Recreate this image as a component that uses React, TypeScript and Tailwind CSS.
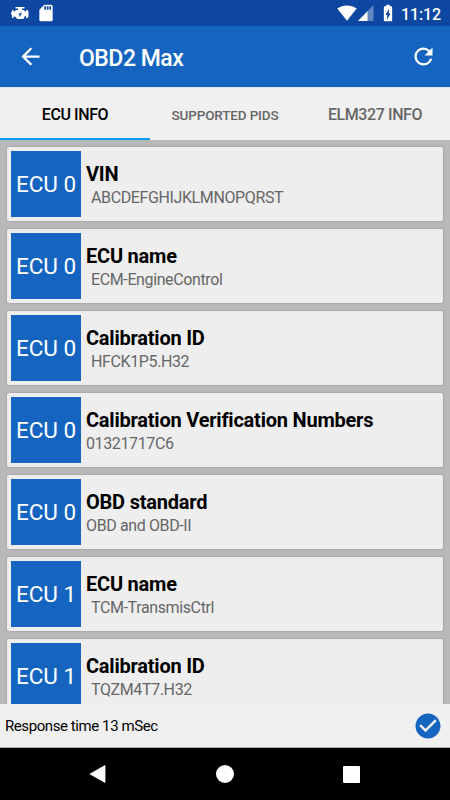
import { MdArrowBack, MdBatteryChargingFull, MdCheckCircle, MdRefresh, MdSdCard } from 'react-icons/md';

type EcuItem = {
  ecu: string;
  title: string;
  value: string;
  padded?: boolean;
};

const items: EcuItem[] = [
  { ecu: 'ECU 0', title: 'VIN', value: 'ABCDEFGHIJKLMNOPQRST', padded: true },
  { ecu: 'ECU 0', title: 'ECU name', value: 'ECM-EngineControl', padded: true },
  { ecu: 'ECU 0', title: 'Calibration ID', value: 'HFCK1P5.H32', padded: true },
  { ecu: 'ECU 0', title: 'Calibration Verification Numbers', value: '01321717C6' },
  { ecu: 'ECU 0', title: 'OBD standard', value: 'OBD and OBD-II' },
  { ecu: 'ECU 1', title: 'ECU name', value: 'TCM-TransmisCtrl', padded: true },
  { ecu: 'ECU 1', title: 'Calibration ID', value: 'TQZM4T7.H32', padded: true },
];

function StatusBar() {
  return (
    <div className="flex h-[26px] shrink-0 items-center bg-[#0d47a1] pl-[11px] pr-[9px] text-white">
      <svg width="18" height="14" viewBox="0 0 18 14" fill="currentColor">
        <path d="M4.500 1h9v1.600H11V4h2l1 1.500h1V4h1.500l1 1.500v5l-1 1.500H15v-2h-1l-1.500 3H6.500L4 10.500H2.500V12H1V9H.2V6H1V4h1.500v1.500h1L5 4h2V2.600H4.500z" />
        <path d="M11.200 5.500 7 8.300l1.800.3-1.300 2.600 3.600-3.200-1.600-.4z" fill="#0d47a1" />
      </svg>
      <MdSdCard size={20} className="ml-[7px]" />
      <div className="ml-auto flex items-center">
        <svg width="20" height="16" viewBox="0 0 20 16" fill="currentColor">
          <path d="M.3 3.500C6-.6 14-.6 19.700 3.500L10 15.700z" />
        </svg>
        <svg width="16" height="16" viewBox="0 0 16 16" fill="currentColor" className="ml-px">
          <path d="M15.500 0v16H0z" opacity=".35" />
          <path d="M9.500 6.200V16H0z" />
        </svg>
        <MdBatteryChargingFull size={20} className="ml-1" />
        <span className="ml-[3px] mt-[3px] text-base font-medium leading-none tracking-[-0.1px]">11:12</span>
      </div>
    </div>
  );
}

function AppBar() {
  return (
    <header className="flex h-[61px] shrink-0 items-center bg-[#1565c0] pl-[17px] pr-[13px] text-white">
      <MdArrowBack size={27} />
      <h1 className="ml-[35px] mt-[3px] text-[23px] font-medium leading-none tracking-[-0.5px]">OBD2 Max</h1>
      <MdRefresh size={27} className="ml-auto" />
    </header>
  );
}

function Tabs() {
  return (
    <nav className="grid h-[53px] shrink-0 grid-cols-3 border-t border-[#dfe5ee] bg-[#f0f0f0] text-center font-medium text-[#666]">
      <div className="flex items-center justify-center border-b-2 border-[#03a0f0] pt-1 text-base tracking-[-0.4px] text-black">ECU INFO</div>
      <div className="flex items-center justify-center pt-0.5 text-[13.500px] tracking-[-0.15px]">SUPPORTED PIDS</div>
      <div className="flex items-center justify-center pt-0.5 text-base tracking-[-0.4px]">ELM327 INFO</div>
    </nav>
  );
}

function EcuCard({ item }: { item: EcuItem }) {
  return (
    <li className="flex h-[74px] shrink-0 rounded-[2px] bg-[#eee] p-1 shadow-[0_0_2px_rgba(0,0,0,0.3)]">
      <div className="flex h-[66px] w-[70px] shrink-0 items-center justify-center bg-[#1565c0] pt-0.5 text-[22.500px] text-white">
        {item.ecu}
      </div>
      <div className="ml-[5px] pt-[11px]">
        <h2 className="text-[20px] font-bold leading-[24px] tracking-[-0.22px] text-black">{item.title}</h2>
        <p className={`pt-px text-base leading-[22px] tracking-[-0.38px] text-[#666] ${item.padded ? 'pl-[5px]' : ''}`}>{item.value}</p>
      </div>
    </li>
  );
}

function NavBar() {
  return (
    <div className="flex h-[52px] shrink-0 items-center justify-center gap-[109px] bg-black pr-0.5 text-white">
      <svg width="18" height="18" viewBox="0 0 18 18" fill="currentColor">
        <path d="M16 .5v17L1 9z" stroke="currentColor" strokeLinejoin="round" strokeWidth=".8" />
      </svg>
      <div className="size-[18px] rounded-full bg-white" />
      <div className="size-[17px] rounded-[1px] bg-white" />
    </div>
  );
}

export default function App() {
  return (
    <div className="flex h-[800px] w-[450px] flex-col overflow-hidden bg-[#b9b9b9] font-['Roboto',sans-serif]">
      <StatusBar />
      <AppBar />
      <Tabs />
      <main className="min-h-0 flex-1 overflow-hidden px-[7px] pt-[7px]">
        <ul className="flex flex-col gap-2">
          {items.map((item, i) => (
            <EcuCard key={i} item={item} />
          ))}
        </ul>
      </main>
      <footer className="flex h-11 shrink-0 items-center justify-between border-b border-[#aab2aa] bg-[#f0f0f0] pl-[5px] pr-[7px]">
        <span className="pt-0.5 text-[15px] tracking-[-0.42px] text-black">Response time 13 mSec</span>
        <MdCheckCircle size={30} className="text-[#1565c0]" />
      </footer>
      <NavBar />
    </div>
  );
}
